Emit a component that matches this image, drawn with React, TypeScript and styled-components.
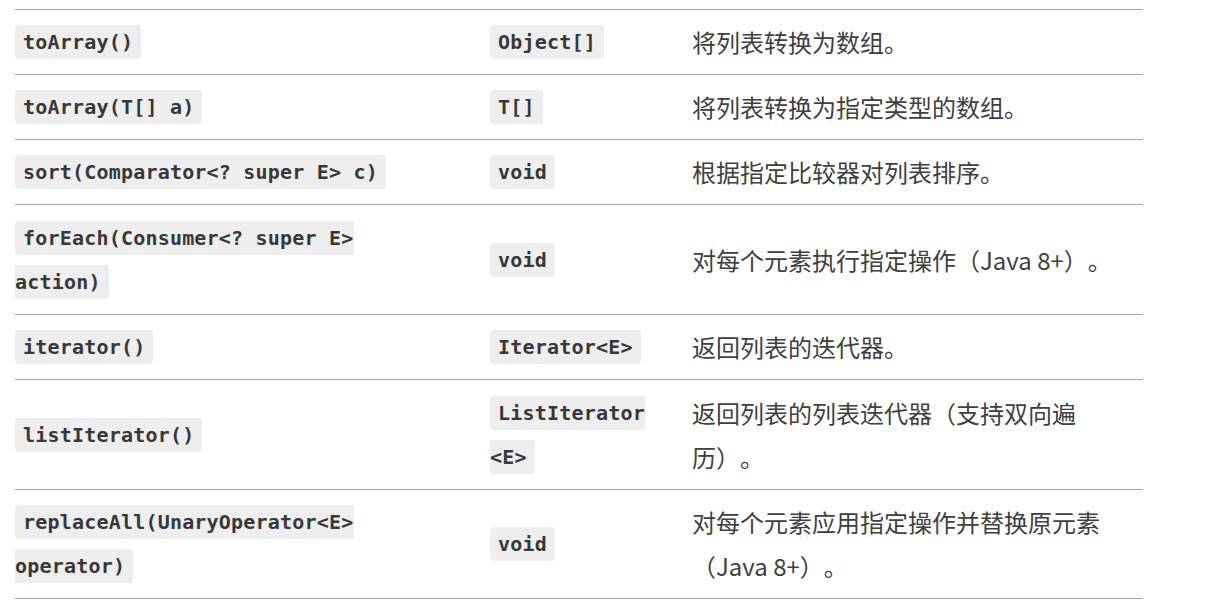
import React from 'react'
import styled, { createGlobalStyle } from 'styled-components'

const GlobalStyle = createGlobalStyle`
  html, body {
    margin: 0;
    padding: 0;
    background: #ffffff;
  }
  body {
    font-family: 'Noto Sans CJK SC', 'Noto Sans', sans-serif;
    color: #333333;
  }
`

const Page = styled.div`
  padding: 9px 0 0 15px;
`

const Table = styled.div`
  width: 1128px;
  border-top: 1px solid #a8a8a8;
`

const Row = styled.div<{ tall?: boolean }>`
  display: grid;
  grid-template-columns: 475px 202px 451px;
  align-items: center;
  border-bottom: 1px solid #a8a8a8;
  min-height: ${({ tall }) => (tall ? '109px' : '64px')};
`

// the cell's own font matches its content so the line box stays at 44px
const Cell = styled.div<{ padRight: number; mono?: boolean }>`
  padding: 10px ${({ padRight }) => padRight}px 10px 0;
  line-height: 44px;
  overflow-wrap: break-word;
  font-family: ${({ mono }) =>
    mono
      ? "'DejaVu Sans Mono', 'Liberation Mono', monospace"
      : "'Noto Sans CJK SC', 'Noto Sans', sans-serif"};
  font-size: ${({ mono }) => (mono ? '20px' : '24px')};
  text-spacing-trim: space-all;
`

const Code = styled.code`
  font-family: inherit;
  font-weight: 700;
  font-size: inherit;
  letter-spacing: 0.2px;
  color: #383838;
  background: #eeeeee;
  border-radius: 4px;
  padding: 5px 8px;
`

const Desc = styled.span`
  font-weight: 400;
  color: #404040;
`

interface MethodRow {
  method: string
  ret: string
  desc: string
  tall?: boolean
}

const rows: MethodRow[] = [
  { method: 'toArray()', ret: 'Object[]', desc: '将列表转换为数组。' },
  { method: 'toArray(T[] a)', ret: 'T[]', desc: '将列表转换为指定类型的数组。' },
  { method: 'sort(Comparator<? super E> c)', ret: 'void', desc: '根据指定比较器对列表排序。' },
  {
    method: 'forEach(Consumer<? super E> action)',
    ret: 'void',
    desc: '对每个元素执行指定操作（Java 8+）。',
    tall: true,
  },
  { method: 'iterator()', ret: 'Iterator<E>', desc: '返回列表的迭代器。' },
  {
    method: 'listIterator()',
    ret: 'ListIterator<E>',
    desc: '返回列表的列表迭代器（支持双向遍历）。',
    tall: true,
  },
  {
    method: 'replaceAll(UnaryOperator<E> operator)',
    ret: 'void',
    desc: '对每个元素应用指定操作并替换原元素（Java 8+）。',
  },
]

export default function App() {
  return (
    <>
      <GlobalStyle />
      <Page>
        <Table>
          {rows.map((r) => (
            <Row key={r.method} tall={r.tall}>
              <Cell padRight={75} mono>
                <Code>{r.method}</Code>
              </Cell>
              <Cell padRight={42} mono>
                <Code>{r.ret}</Code>
              </Cell>
              <Cell padRight={11}>
                <Desc>{r.desc}</Desc>
              </Cell>
            </Row>
          ))}
        </Table>
      </Page>
    </>
  )
}
